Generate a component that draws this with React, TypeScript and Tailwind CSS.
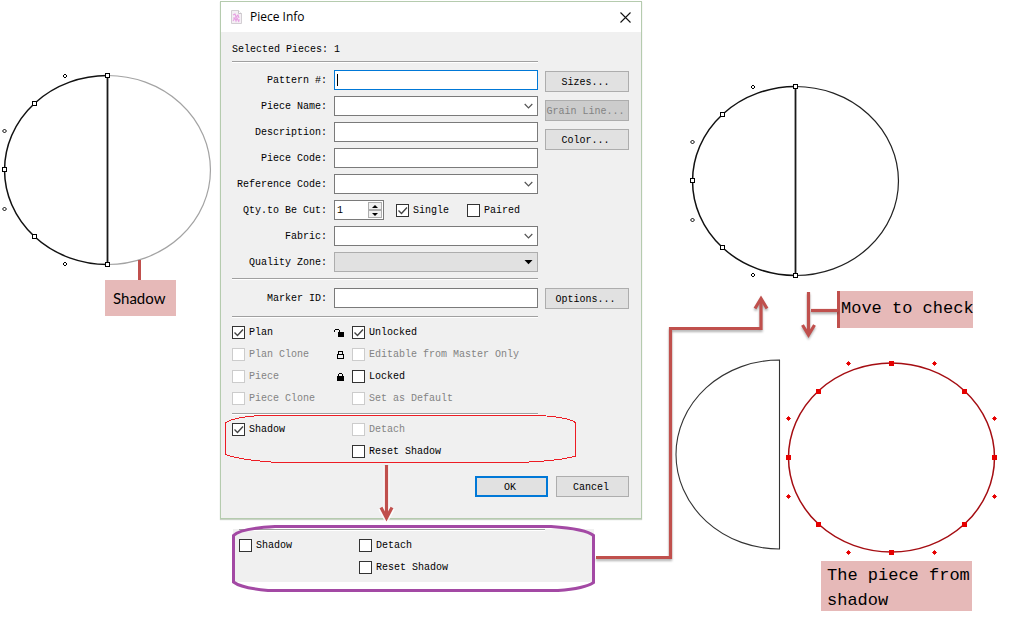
import type { ReactNode } from "react";

type Point = [number, number];

const MONO = "font-['Liberation_Mono','Noto_Sans_CJK_SC',monospace]";

function SquareNodes({ points, color, filled }: { points: Point[]; color: string; filled?: boolean }) {
  return (
    <g shapeRendering="crispEdges">
      {points.map(([x, y]) => (
        <rect key={`${x}-${y}`} x={x - 2} y={y - 2} width="4" height="4" fill={filled ? color : "#fff"} stroke={color} />
      ))}
    </g>
  );
}

function RoundNodes({ points, color, filled }: { points: Point[]; color: string; filled?: boolean }) {
  return (
    <g fill={filled ? color : "#fff"} stroke={color}>
      {points.map(([x, y]) => (
        <path key={`${x}-${y}`} d={`M${x - 2} ${y}l2 -2l2 2l-2 2z`} />
      ))}
    </g>
  );
}

function SplitCircle({ x, y, ghost }: { x: number; y: number; ghost: string }) {
  return (
    <g fill="none">
      <path d={`M${x} ${y - 94}a103 94.5 0 0 1 0 189`} stroke={ghost} strokeWidth="1.2" />
      <path d={`M${x} ${y - 94}a103 94.5 0 0 0 0 189`} stroke="#111" strokeWidth="1.5" />
      <path d={`M${x} ${y - 94}v189`} stroke="#1a1a1a" strokeWidth="1.8" />
      <SquareNodes
        color="#000"
        points={[
          [x, y - 94],
          [x - 73, y - 66],
          [x - 103, y],
          [x - 73, y + 67],
          [x, y + 95],
        ]}
      />
      <RoundNodes
        color="#000"
        points={[
          [x - 42.5, y - 93.5],
          [x - 103, y - 38.5],
          [x - 103, y + 39.5],
          [x - 42.5, y + 94.5],
        ]}
      />
    </g>
  );
}

function Rule() {
  return <div className="h-[2px] w-[306px] border-t border-[#a0a0a0] bg-white" />;
}

function Check({ label, checked, disabled }: { label: string; checked?: boolean; disabled?: boolean }) {
  return (
    <label className={`flex items-center gap-1 whitespace-nowrap ${disabled ? "text-[#838383]" : "text-black"}`}>
      <span className="relative block size-[13px] shrink-0">
        <input
          type="checkbox"
          defaultChecked={checked}
          disabled={disabled}
          className="peer block size-[13px] appearance-none border border-[#333] bg-white disabled:border-[#ccc]"
        />
        <svg viewBox="0 0 13 13" className="pointer-events-none absolute inset-0 hidden size-[13px] peer-checked:block">
          <path d="M2.5 6.5l3 3l5.5 -6" fill="none" stroke="#444" strokeWidth="1.4" />
        </svg>
      </span>
      <span className="pt-px">{label}</span>
    </label>
  );
}

function Field({ id, label, children }: { id: string; label: string; children: ReactNode }) {
  return (
    <>
      <label htmlFor={id} className="pt-[2px] text-right whitespace-nowrap">
        {label}
      </label>
      {children}
    </>
  );
}

function TextBox({ id }: { id: string }) {
  return <input id={id} type="text" className="h-5 w-full border border-[#7a7a7a] bg-white px-[3px] outline-none" />;
}

function Combo({ id, flat }: { id: string; flat?: boolean }) {
  return (
    <span className="relative block">
      <select
        id={id}
        className={`block h-5 w-full appearance-none border outline-none ${
          flat ? "border-[#adadad] bg-[#e1e1e1]" : "border-[#7a7a7a] bg-white"
        }`}
      >
        <option value="" />
      </select>
      <svg viewBox="0 0 9 6" className="pointer-events-none absolute top-[7px] right-[5px] h-[6px] w-[9px]">
        {flat ? (
          <path d="M0.500 1h8l-4 4.200z" fill="#000" />
        ) : (
          <path d="M0.700 1l3.800 3.800l3.800 -3.800" fill="none" stroke="#555" strokeWidth="1.2" />
        )}
      </svg>
    </span>
  );
}

function PushButton({ children, wide, primary, disabled }: { children: string; wide?: boolean; primary?: boolean; disabled?: boolean }) {
  return (
    <button
      type="button"
      disabled={disabled}
      className={`h-[21px] pt-[2px] pr-[3px] whitespace-nowrap ${wide ? "w-[84px]" : "w-[73px]"} ${
        primary ? "border-2 border-[#0078d7]" : "border border-[#adadad]"
      } ${disabled ? "bg-[#ccc] text-[#838383]" : "bg-[#e1e1e1] text-black"}`}
    >
      {children}
    </button>
  );
}

function Padlock({ kind }: { kind: "open" | "outline" | "solid" }) {
  return (
    <svg viewBox="0 0 12 10" className="h-[10px] w-3" shapeRendering="crispEdges">
      {kind === "open" && (
        <>
          <path d="M0.500 4V2.500L1.500 1.500H4.500L5.500 2.500V4" fill="none" stroke="#000" />
          <rect x="4" y="4" width="6" height="5" fill="#000" />
        </>
      )}
      {kind === "outline" && (
        <path d="M3.500 8.500h6v-4h-6zM4.500 4V2L5.500 1.500H7.500L8.500 2V4" fill="none" stroke="#000" />
      )}
      {kind === "solid" && (
        <>
          <path d="M4.500 4V2.500L5.500 1.500H7.500L8.500 2.500V4" fill="none" stroke="#000" />
          <rect x="3" y="4" width="7" height="5" fill="#000" />
        </>
      )}
    </svg>
  );
}

function PieceInfoDialog() {
  return (
    <section role="dialog" aria-labelledby="dialog-title" className="relative border border-[#b5cbae] bg-[#f0f0f0] shadow-[0_1px_1px_#c9d2c6]">
      <header className="flex h-[30px] items-center bg-white pr-2 pl-2">
        <svg viewBox="0 0 14 16" className="h-4 w-[14px]">
          <path d="M2.500 1.500h7l3 3v10h-10z" fill="#f4eff4" stroke="#d3ced3" />
          <path d="M9.500 1.500v3h3" fill="#fff" stroke="#c9c4c9" />
          <path d="M4 6l2 -1l1 3l2 -2l1 3M4 12l2 -3l1 3l1 -3l2 4M4 9h2M9 11h2" fill="none" stroke="#e7a0e2" strokeWidth="1.1" />
        </svg>
        <h1 id="dialog-title" className="ml-[7px] flex-1 font-['Open_Sans',sans-serif] text-[12px] leading-4">
          Piece Info
        </h1>
        <button type="button" aria-label="Close" className="grid size-4 place-items-center">
          <svg viewBox="0 0 11 11" className="size-[11px]">
            <path d="M0.500 0.500l10 10M10.500 0.500l-10 10" stroke="#111" strokeWidth="1.1" />
          </svg>
        </button>
      </header>

      <form className="pt-[11px] pr-3 pb-[21px] pl-[11px]">
        <p className="mb-1 leading-[14px]">
          Selected Pieces: <output>1</output>
        </p>
        <Rule />

        <div className="mt-[7px] flex justify-between">
          <div className="grid w-[306px] auto-rows-[20px] grid-cols-[95px_204px] items-center gap-x-[7px] gap-y-[6px]">
            <Field id="pattern" label="Pattern #:">
              <span className="relative block">
                <input id="pattern" type="text" className="block h-5 w-full border border-[#0078d7] bg-white px-[3px] outline-none" />
                <span className="absolute top-1 left-[3px] h-3 w-px bg-black" />
              </span>
            </Field>
            <Field id="name" label="Piece Name:">
              <Combo id="name" />
            </Field>
            <Field id="description" label="Description:">
              <TextBox id="description" />
            </Field>
            <Field id="code" label="Piece Code:">
              <TextBox id="code" />
            </Field>
            <Field id="reference" label="Reference Code:">
              <Combo id="reference" />
            </Field>
            <Field id="quantity" label="Qty.to Be Cut:">
              <div className="flex items-center">
                <span className="flex h-5 w-[50px] border border-[#7a7a7a] bg-white p-px">
                  <input id="quantity" type="text" inputMode="numeric" defaultValue="1" className="w-0 flex-1 pt-[2px] pl-px outline-none" />
                  <span className="flex w-[14px] flex-col">
                    <button type="button" aria-label="Increase" className="grid h-2 place-items-center border border-[#adadad] bg-[#f0f0f0]">
                      <svg viewBox="0 0 6 3" className="h-[3px] w-[6px]">
                        <path d="M0 3h6l-3 -3z" />
                      </svg>
                    </button>
                    <button type="button" aria-label="Decrease" className="grid h-2 place-items-center border border-[#adadad] bg-[#f0f0f0]">
                      <svg viewBox="0 0 6 3" className="h-[3px] w-[6px]">
                        <path d="M0 0h6l-3 3z" />
                      </svg>
                    </button>
                  </span>
                </span>
                <div className="ml-3 flex gap-[18px]">
                  <Check label="Single" checked />
                  <Check label="Paired" />
                </div>
              </div>
            </Field>
            <Field id="fabric" label="Fabric:">
              <Combo id="fabric" />
            </Field>
            <Field id="zone" label="Quality Zone:">
              <Combo id="zone" flat />
            </Field>
          </div>
          <div className="mt-px flex flex-col gap-2">
            <PushButton wide>Sizes...</PushButton>
            <PushButton wide disabled>
              Grain Line...
            </PushButton>
            <PushButton wide>Color...</PushButton>
          </div>
        </div>

        <div className="mt-[6px]">
          <Rule />
        </div>
        <div className="mt-2 flex h-5 items-start justify-between">
          <div className="grid w-[306px] grid-cols-[95px_204px] items-center gap-x-[7px]">
            <Field id="marker" label="Marker ID:">
              <TextBox id="marker" />
            </Field>
          </div>
          <PushButton wide>Options...</PushButton>
        </div>

        <div className="mt-2">
          <Rule />
        </div>
        <div className="mt-2 grid auto-rows-[13px] grid-cols-[102px_18px_1fr] items-center gap-y-[9px]">
          <Check label="Plan" checked />
          <Padlock kind="open" />
          <Check label="Unlocked" checked />
          <Check label="Plan Clone" disabled />
          <Padlock kind="outline" />
          <Check label="Editable from Master Only" disabled />
          <Check label="Piece" disabled />
          <Padlock kind="solid" />
          <Check label="Locked" />
          <Check label="Piece Clone" disabled />
          <span />
          <Check label="Set as Default" disabled />
        </div>

        <div className="mt-2">
          <Rule />
        </div>
        <div className="relative mt-2 grid auto-rows-[13px] grid-cols-[120px_1fr] items-center gap-y-[9px]">
          <Check label="Shadow" checked />
          <Check label="Detach" disabled />
          <span />
          <Check label="Reset Shadow" />
          <svg viewBox="225 415 352 48" className="pointer-events-none absolute -top-2 -left-[7px] h-12 w-[352px]" shapeRendering="crispEdges">
            <path
              d="M260 415.500H539Q567 417 575.500 422.500V456Q560 461 518 462.500H277Q240 460 225.500 454.500V423Q232 417.500 260 415.500Z"
              fill="none"
              stroke="#ed1c24"
            />
          </svg>
        </div>

        <div className="mt-[18px] flex justify-end gap-2">
          <PushButton primary>OK</PushButton>
          <PushButton>Cancel</PushButton>
        </div>
      </form>

      <svg viewBox="376 465 24 60" className="pointer-events-none absolute top-[463px] left-[154px] h-[60px] w-6">
        <g fill="none">
          <path d="M387.500 466V519M382 508L387.500 518.500L393 508" stroke="#fff" strokeWidth="6" strokeOpacity="0.8" />
          <path d="M387.500 465V518M382 507.500L387.500 518L393 507.500" stroke="#c0504d" strokeWidth="3.2" />
        </g>
      </svg>
    </section>
  );
}

function ShadowPanel() {
  return (
    <section aria-label="Shadow options" className="relative mt-[10px] ml-[13px] h-[53px] w-[361px] bg-[#f0f0f0] pl-[6px]">
      <Rule />
      <div className="mt-2 grid auto-rows-[13px] grid-cols-[120px_1fr] items-center gap-y-[9px]">
        <Check label="Shadow" />
        <Check label="Detach" />
        <span />
        <Check label="Reset Shadow" />
      </div>
      <svg viewBox="231 524 366 69" className="pointer-events-none absolute -top-[5px] -left-[2px] h-[69px] w-[366px]">
        <path
          d="M275 526.500H551Q586 529 593.500 535.500V582.500Q585 588.500 558 590.500H268Q241 588 233.500 582V535.500Q240 528.500 275 526.500Z"
          fill="none"
          stroke="#a349a4"
          strokeWidth="3"
        />
      </svg>
    </section>
  );
}

function ShadowFigure() {
  return (
    <figure className="w-[220px] shrink-0">
      <svg viewBox="0 0 220 280" className="block h-[280px] w-[220px]">
        <SplitCircle x={107.5} y={169.5} ghost="#a3a3a3" />
        <path d="M139.500 260v20" stroke="#c0504d" strokeWidth="3" />
      </svg>
      <figcaption className="ml-[105px] h-9 w-[71px] bg-[#e6b9b8] pl-2 font-[Lato,sans-serif] text-[15px] leading-9">
        Shadow
      </figcaption>
    </figure>
  );
}

function ResultFigures() {
  return (
    <figure className="relative w-[379px] shrink-0 text-[17px]">
      <svg viewBox="642 0 379 291" className="block h-[291px] w-full">
        <SplitCircle x={795.5} y={180.5} ghost="#222" />
      </svg>
      <p className="ml-[195px] h-[37px] w-[136px] border-l-[3px] border-[#c0504d] bg-[#e6b9b8] pl-px leading-9 whitespace-nowrap">
        Move to check
      </p>
      <svg viewBox="642 328 379 233" className="block h-[233px] w-full">
        <path d="M779.500 360V549A103.500 94.500 0 0 1 779.500 360Z" fill="none" stroke="#333" strokeWidth="1.1" />
        <ellipse cx="891.5" cy="457.5" rx="103" ry="94.500" fill="none" stroke="#a50d12" strokeWidth="1.5" />
        <SquareNodes
          filled
          color="#e60000"
          points={[
            [891.5, 363.5],
            [818.5, 391.5],
            [964.5, 391.5],
            [788.5, 457.5],
            [994.5, 457.5],
            [818.5, 524.5],
            [964.5, 524.5],
            [891.5, 552.5],
          ]}
        />
        <RoundNodes
          filled
          color="#e60000"
          points={[
            [848.5, 363.5],
            [934.5, 363.5],
            [788.5, 418.5],
            [994.5, 418.5],
            [788.5, 496.5],
            [994.5, 496.5],
            [848.5, 552.5],
            [934.5, 552.5],
          ]}
        />
      </svg>
      <figcaption className="ml-[179px] h-[50px] w-[151px] bg-[#e6b9b8] px-[6px] pt-[2px] leading-[25px]">
        <span className="block whitespace-nowrap">The piece from</span>
        <span className="block">shadow</span>
      </figcaption>
      <svg viewBox="596 285 250 285" className="pointer-events-none absolute top-[285px] -left-[46px] h-[285px] w-[250px] drop-shadow-[0_2px_1px_rgba(0,0,0,0.3)]">
        <g fill="none" stroke="#c0504d" strokeWidth="3.2">
          <path d="M596 557.500H670.500V328.500H761V300" />
          <path d="M755 308.500L761 298.500L767 308.500" />
          <path d="M808.500 292V334M802.500 325L808.500 335L814.500 325" />
          <path d="M811 310.500H838" />
        </g>
      </svg>
    </figure>
  );
}

export default function App() {
  return (
    <main className={`flex min-h-screen items-start bg-white text-[10px] leading-3 text-black ${MONO}`}>
      <ShadowFigure />
      <div className="w-[422px] shrink-0 pt-px">
        <PieceInfoDialog />
        <ShadowPanel />
      </div>
      <ResultFigures />
    </main>
  );
}
